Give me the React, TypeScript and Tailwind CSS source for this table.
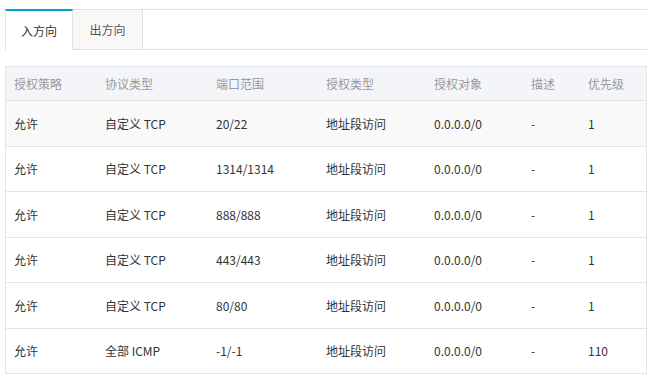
import React from "react";

const rules = [
  { policy: "允许", proto: "自定义 TCP", port: "20/22", type: "地址段访问", target: "0.0.0.0/0", desc: "-", priority: "1" },
  { policy: "允许", proto: "自定义 TCP", port: "1314/1314", type: "地址段访问", target: "0.0.0.0/0", desc: "-", priority: "1" },
  { policy: "允许", proto: "自定义 TCP", port: "888/888", type: "地址段访问", target: "0.0.0.0/0", desc: "-", priority: "1" },
  { policy: "允许", proto: "自定义 TCP", port: "443/443", type: "地址段访问", target: "0.0.0.0/0", desc: "-", priority: "1" },
  { policy: "允许", proto: "自定义 TCP", port: "80/80", type: "地址段访问", target: "0.0.0.0/0", desc: "-", priority: "1" },
  { policy: "允许", proto: "全部 ICMP", port: "-1/-1", type: "地址段访问", target: "0.0.0.0/0", desc: "-", priority: "110" },
];

const headers = ["授权策略", "协议类型", "端口范围", "授权类型", "授权对象", "描述", "优先级"];

// column widths, last one fills the rest
const colClass = [
  "w-[91px] shrink-0",
  "w-[111px] shrink-0",
  "w-[110px] shrink-0",
  "w-[108px] shrink-0",
  "w-[97px] shrink-0",
  "w-[57px] shrink-0",
  "flex-1",
];

export default function App() {
  return (
    <div
      className="w-[647px] h-[385px] bg-white pt-[9px] pl-[5px] text-[12px] text-[#333]"
      style={{ fontFamily: '"Noto Sans CJK SC", "Noto Sans", sans-serif' }}
    >
      {/* Tabs */}
      <div className="flex h-[41px]">
        <div className="w-[68px] border-t-2 border-t-[#00a2ca] border-l border-r border-[#e1e1e1] bg-white flex items-center justify-center text-[#333]">
          入方向
        </div>
        <div className="w-[70px] border-t border-b border-r border-[#e1e1e1] bg-[#f9f8f7] flex items-center justify-center text-[#555]">
          出方向
        </div>
        <div className="flex-1 border-t border-b border-[#e1e1e1]" />
      </div>

      {/* Table */}
      <div className="mt-[16px] border border-t border-[#e1e6eb] border-b-0">
        <div className="flex h-[34px] items-center bg-[#f4f5f9] border-b border-[#e1e6eb] text-[#999]">
          {headers.map((h, i) => (
            <div key={h} className={`${colClass[i]} pl-[8px]`}>
              {h}
            </div>
          ))}
        </div>
        {rules.map((r, idx) => {
          const cells = [r.policy, r.proto, r.port, r.type, r.target, r.desc, r.priority];
          return (
            <div
              key={idx}
              className={
                "flex items-center border-b border-[#e1e6eb] " +
                (idx % 2 === 0 ? "h-[46px] " : "h-[45px] ") +
                (idx === 0 ? "bg-[#f9f9f9]" : "bg-white")
              }
            >
              {cells.map((c, i) => (
                <div key={i} className={`${colClass[i]} pl-[8px]`}>
                  {c}
                </div>
              ))}
            </div>
          );
        })}
      </div>
    </div>
  );
}
